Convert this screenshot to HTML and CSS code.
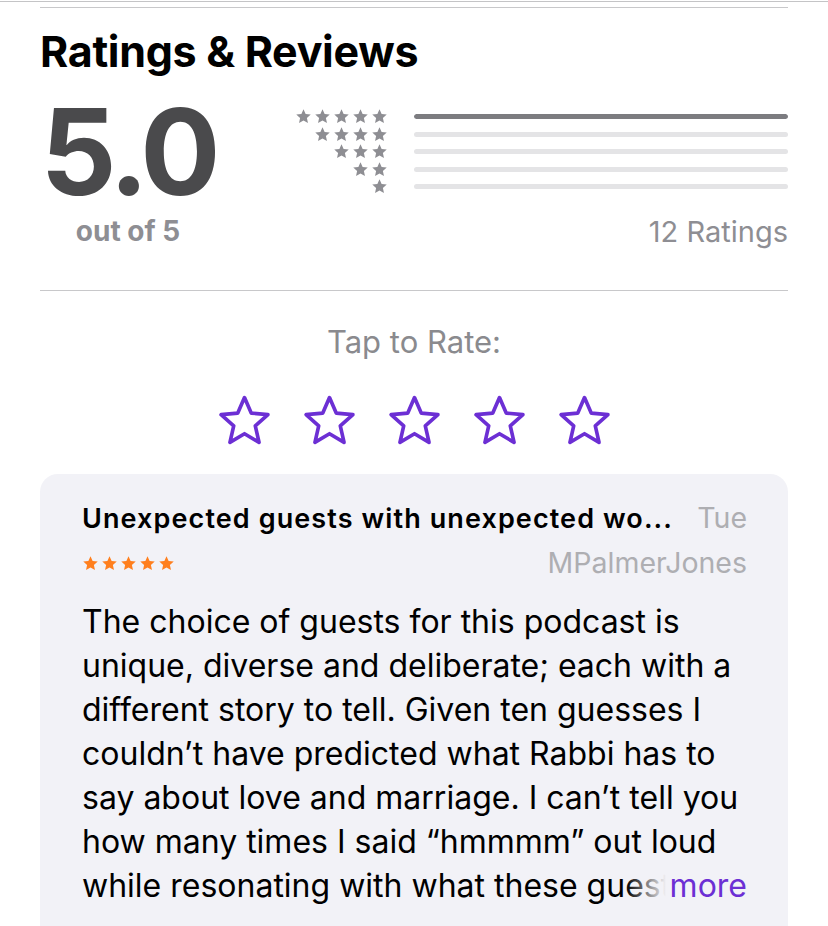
FILE: index.html
```html
<!DOCTYPE html>
<html lang="en">
<head>
    <meta charset="UTF-8">
    <meta name="viewport" content="width=device-width, initial-scale=1.0">
    <title>Ratings &amp; Reviews</title>
    <link rel="stylesheet" href="styles.css">
</head>
<body>
    <svg width="0" height="0" class="defs">
        <symbol id="star" viewBox="0 0 24 24">
            <path d="M12 1.8l3 6.6 7.2.8-5.4 4.9 1.5 7.1L12 17.6l-6.3 3.6 1.5-7.1-5.4-4.9 7.2-.8z"/>
        </symbol>
        <symbol id="star-outline" viewBox="0 0 56 56">
            <path d="M28 4.5l6.6 15.2 16.4 1.6-12.4 11 3.7 16.2L28 40l-14.3 8.5 3.7-16.2-12.4-11 16.4-1.6z"/>
        </symbol>
    </svg>

    <div class="top-rule"></div>
    <main class="page">
        <div class="rule"></div>
        <h1 class="title">Ratings &amp; Reviews</h1>

        <section class="summary">
            <div class="score">
                <div class="score-value">5.0</div>
                <div class="score-caption">out of 5</div>
            </div>
            <div class="histogram">
                <div class="hist-rows">
                    <div class="hist-stars">
                        <svg><use href="#star"/></svg><svg><use href="#star"/></svg><svg><use href="#star"/></svg><svg><use href="#star"/></svg><svg><use href="#star"/></svg>
                    </div>
                    <div class="bar"><div class="bar-fill" style="width:100%"></div></div>
                    <div class="hist-stars">
                        <svg><use href="#star"/></svg><svg><use href="#star"/></svg><svg><use href="#star"/></svg><svg><use href="#star"/></svg>
                    </div>
                    <div class="bar"><div class="bar-fill" style="width:0%"></div></div>
                    <div class="hist-stars">
                        <svg><use href="#star"/></svg><svg><use href="#star"/></svg><svg><use href="#star"/></svg>
                    </div>
                    <div class="bar"><div class="bar-fill" style="width:0%"></div></div>
                    <div class="hist-stars">
                        <svg><use href="#star"/></svg><svg><use href="#star"/></svg>
                    </div>
                    <div class="bar"><div class="bar-fill" style="width:0%"></div></div>
                    <div class="hist-stars">
                        <svg><use href="#star"/></svg>
                    </div>
                    <div class="bar"><div class="bar-fill" style="width:0%"></div></div>
                </div>
                <div class="count">12 Ratings</div>
            </div>
        </section>

        <div class="rule"></div>

        <div class="tap">Tap to Rate:</div>
        <div class="rate-stars">
            <svg><use href="#star-outline"/></svg>
            <svg><use href="#star-outline"/></svg>
            <svg><use href="#star-outline"/></svg>
            <svg><use href="#star-outline"/></svg>
            <svg><use href="#star-outline"/></svg>
        </div>

        <article class="review-card">
            <div class="review-head">
                <div class="review-title">Unexpected guests with unexpected wo...</div>
                <div class="review-date">Tue</div>
            </div>
            <div class="review-meta">
                <div class="review-stars">
                    <svg><use href="#star"/></svg><svg><use href="#star"/></svg><svg><use href="#star"/></svg><svg><use href="#star"/></svg><svg><use href="#star"/></svg>
                </div>
                <div class="review-author">MPalmerJones</div>
            </div>
            <div class="review-body">
                <p class="review-text">The choice of guests for this podcast is unique, diverse and deliberate; each with a different story to tell. Given ten guesses I couldn’t have predicted what Rabbi has to say about love and marriage. I can’t tell you how many times I said “hmmmm” out loud while resonating with what these guests had to share, and I keep coming back for more.</p>
                <span class="more">more</span>
            </div>
        </article>
    </main>
</body>
</html>
```

FILE: styles.css
```css
body {
    margin: 0;
    background: #fff;
    font-family: Inter, 'Noto Sans', sans-serif;
    color: #000;
}

.defs {
    position: absolute;
}

.top-rule {
    height: 1px;
    margin-top: 1px;
    background: #c4c4c6;
}

.page {
    padding: 0 40px;
}

.rule {
    height: 1px;
    background: #c8c8ca;
}

.page > .rule:first-child {
    margin-top: 5px;
}

.title {
    margin: 19px 0 0;
    font-size: 43px;
    line-height: 48px;
    font-weight: 700;
    letter-spacing: -0.3px;
}

/* summary: big score + histogram */
.summary {
    display: flex;
    justify-content: space-between;
    height: 215px;
}

.score {
    display: flex;
    flex-direction: column;
    align-items: center;
    width: 176px;
}

.score-value {
    font-size: 119px;
    line-height: 120px;
    font-weight: 700;
    color: #4a4a4c;
    letter-spacing: -5px;
    margin-top: 17px;
}

.score-caption {
    font-size: 28px;
    line-height: 32px;
    font-weight: 700;
    color: #8e8e93;
    margin-top: 3px;
}

.histogram {
    width: 498px;
    display: flex;
    flex-direction: column;
}

.hist-rows {
    display: grid;
    grid-template-columns: 98px 1fr;
    grid-auto-rows: 17.5px;
    column-gap: 26px;
    align-items: center;
    margin-top: 33px;
}

.hist-stars {
    display: flex;
    justify-content: flex-end;
    gap: 2px;
}

.hist-stars svg {
    width: 17px;
    height: 17px;
    fill: #8e8e93;
}

.bar {
    height: 5px;
    border-radius: 3px;
    background: #e4e4e6;
    overflow: hidden;
}

.bar-fill {
    height: 100%;
    background: #7c7c80;
    border-radius: 3px;
}

.count {
    align-self: flex-end;
    margin-top: 19px;
    font-size: 29px;
    line-height: 34px;
    color: #8e8e93;
}

.tap {
    text-align: center;
    margin-top: 33px;
    font-size: 31px;
    line-height: 36px;
    color: #8a8a8e;
}

.rate-stars {
    display: flex;
    justify-content: center;
    gap: 28px;
    margin-top: 33px;
    padding-left: 1px;
}

.rate-stars svg {
    width: 57px;
    height: 57px;
    fill: none;
    stroke: #6c2fd4;
    stroke-width: 3.6;
    stroke-linejoin: round;
}

/* review card */
.review-card {
    margin-top: 24px;
    background: #f2f2f7;
    border-radius: 18px 18px 0 0;
    padding: 28px 41px 40px 42px;
}

.review-head,
.review-meta {
    display: flex;
    justify-content: space-between;
    align-items: baseline;
}

.review-title {
    font-size: 27px;
    line-height: 32px;
    font-weight: 600;
    letter-spacing: 1.1px;
    white-space: nowrap;
}

.review-date,
.review-author {
    font-size: 28.5px;
    line-height: 32px;
    color: #aeaeb2;
}

.review-meta {
    align-items: center;
    margin-top: 12px;
}

.review-stars {
    display: flex;
    gap: 2px;
}

.review-stars svg {
    width: 17px;
    height: 17px;
    fill: #ff7f1e;
}

.review-body {
    position: relative;
    margin-top: 21px;
}

.review-text {
    margin: 0;
    font-size: 32px;
    line-height: 44px;
    display: -webkit-box;
    -webkit-line-clamp: 7;
    -webkit-box-orient: vertical;
    overflow: hidden;
}

.more {
    position: absolute;
    right: 0;
    bottom: 0;
    padding-left: 44px;
    font-size: 32px;
    line-height: 44px;
    color: #6c2fd4;
    background: linear-gradient(to right, rgba(242, 242, 247, 0) 0, #f2f2f7 40px);
}
```
